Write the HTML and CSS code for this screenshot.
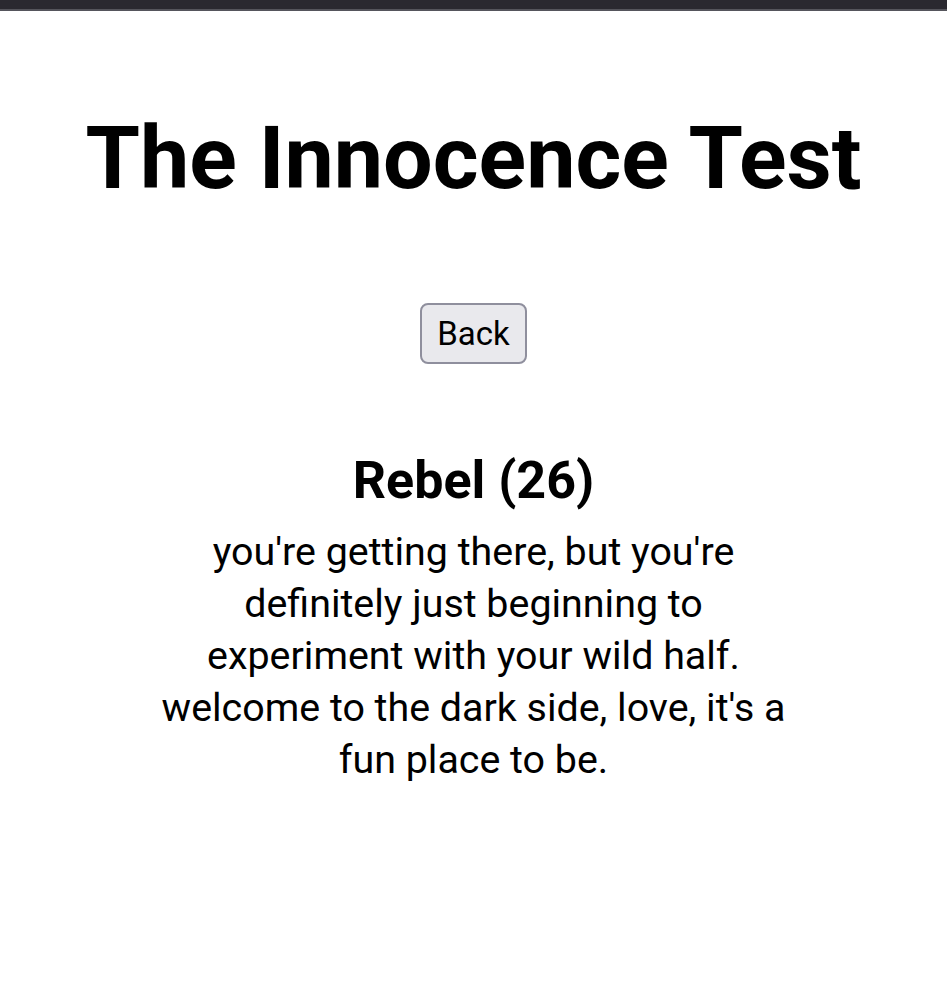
FILE: index.html
```html
<!DOCTYPE html>
<html>
<head>
<meta charset="utf-8">
<link rel="stylesheet" href="styles.css">
</head>
<body>
<div class="topbar"></div>
<main class="page">
  <h1 class="title">The Innocence Test</h1>
  <button class="back">Back</button>
  <section class="result">
    <h2 class="result-title">Rebel (26)</h2>
    <p class="result-text">you're getting there, but you're definitely just beginning to experiment with your wild half. welcome to the dark side, love, it's a fun place to be.</p>
  </section>
</main>
</body>
</html>
```

FILE: styles.css
```css
html, body {
  margin: 0;
  padding: 0;
  background: #ffffff;
}
body {
  font-family: Roboto, "Liberation Sans", sans-serif;
  color: #000;
}
.topbar {
  height: 9px;
  background: #2a2930;
  border-bottom: 2px solid #55555c;
}
.page {
  display: flex;
  flex-direction: column;
  align-items: center;
  text-align: center;
}
.title {
  margin: 92px 0 0;
  font-size: 88px;
  font-weight: 700;
  line-height: 110px;
}
.back {
  margin-top: 90px;
  width: 107px;
  height: 61px;
  font-family: Roboto, "Liberation Sans", sans-serif;
  font-size: 33px;
  color: #000;
  background: #e9e9ed;
  border: 2px solid #8f8f9d;
  border-radius: 8px;
  padding: 0;
}
.result {
  margin-top: 87px;
  width: 640px;
}
.result-title {
  margin: 0;
  font-size: 52px;
  font-weight: 700;
  line-height: 60px;
}
.result-text {
  margin: 15px 0 0;
  font-size: 39.4px;
  line-height: 52px;
}
```
